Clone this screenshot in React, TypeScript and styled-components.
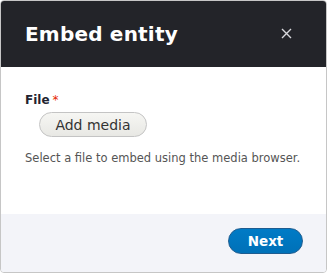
import React from 'react';
import styled, { createGlobalStyle } from 'styled-components';

const GlobalStyle = createGlobalStyle`
  html, body {
    margin: 0;
    padding: 0;
    background: #ffffff;
  }
  body {
    font-family: "DejaVu Sans", "Liberation Sans", sans-serif;
  }
`;

const Dialog = styled.div`
  box-sizing: border-box;
  width: 327px;
  height: 273px;
  display: flex;
  flex-direction: column;
  border: 1px solid #c6c6c6;
  border-radius: 4px;
  overflow: hidden;
  background: #ffffff;
`;

const Header = styled.div`
  display: flex;
  align-items: center;
  justify-content: space-between;
  height: 67px;
  margin: -1px -1px 0;
  padding: 0 35px 0 25px;
  background: #232429;
  color: #ffffff;
`;

const Title = styled.h1`
  margin: 0;
  font-size: 20px;
  font-weight: 700;
  letter-spacing: 0.2px;
`;

const CloseButton = styled.button`
  border: 0;
  background: none;
  padding: 0;
  width: 11px;
  height: 11px;
  display: flex;
  color: #d8d8dc;
  cursor: pointer;
`;

const Body = styled.div`
  flex: 1;
  padding: 25px 24px 0;
`;

const Label = styled.div`
  font-size: 12px;
  font-weight: 700;
  color: #222330;
  line-height: 16px;
`;

const Required = styled.span`
  color: #e62600;
  font-weight: 400;
  margin-left: 3px;
`;

const AddMedia = styled.button`
  display: block;
  margin: 4px 0 0 14px;
  width: 108px;
  height: 25px;
  border: 1px solid #c4c4c4;
  border-radius: 13px;
  background: linear-gradient(#f6f6f3, #e8e8e4);
  color: #333333;
  font-family: inherit;
  font-size: 14px;
  padding: 0;
`;

const Description = styled.p`
  margin: 14px 0 0;
  font-size: 11.5px;
  color: #555555;
`;

const Footer = styled.div`
  display: flex;
  justify-content: flex-end;
  align-items: center;
  height: 58px;
  padding: 0 23px 0 0;
  background: #f3f4f9;
`;

const PrimaryButton = styled.button`
  width: 75px;
  height: 26px;
  border: 1px solid #1e5c90;
  border-radius: 13px;
  background: linear-gradient(#007bc6, #0071b8);
  color: #ffffff;
  font-family: inherit;
  font-size: 13.5px;
  font-weight: 700;
  padding: 0;
  margin-top: -4px;
`;

export default function App() {
  return (
    <>
      <GlobalStyle />
      <Dialog>
        <Header>
          <Title>Embed entity</Title>
          <CloseButton aria-label="Close">
            <svg width="11" height="11" viewBox="0 0 11 11">
              <path d="M1 1 L10 10 M10 1 L1 10" stroke="currentColor" strokeWidth="1.4" />
            </svg>
          </CloseButton>
        </Header>
        <Body>
          <Label>
            File<Required>*</Required>
          </Label>
          <AddMedia>Add media</AddMedia>
          <Description>Select a file to embed using the media browser.</Description>
        </Body>
        <Footer>
          <PrimaryButton>Next</PrimaryButton>
        </Footer>
      </Dialog>
    </>
  );
}
